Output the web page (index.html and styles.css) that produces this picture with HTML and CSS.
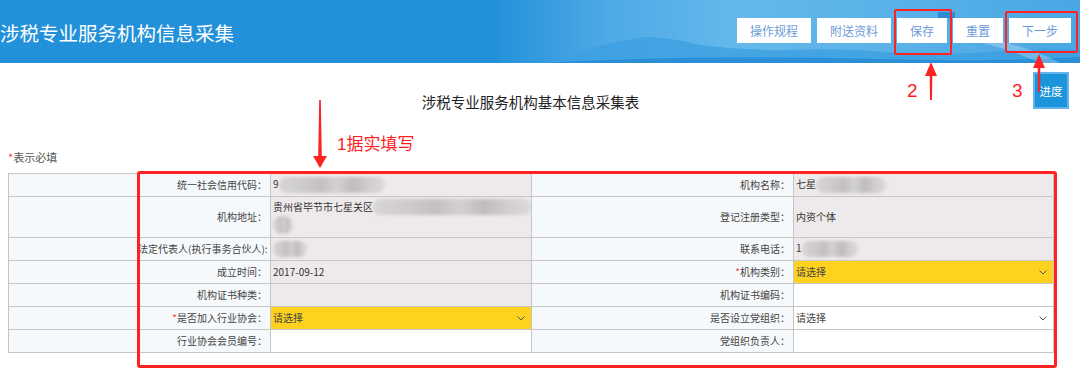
FILE: index.html
```html
<!DOCTYPE html>
<html lang="zh-CN">
<head>
    <meta charset="UTF-8">
    <meta name="viewport" content="width=device-width, initial-scale=1.0">
    <title>涉税专业服务机构信息采集</title>
    <link rel="stylesheet" href="styles.css">
</head>
<body>

    <!-- Header -->
    <header class="topbar">
        <svg class="topbar-bg" width="1080" height="63" viewBox="0 0 1080 63">
            <path d="M560 63 L585 50 Q620 40 646 37 Q668 37 700 45 Q745 51 790 50 Q840 48 885 52 Q950 56 1000 51 Q1045 47 1080 50 L1080 63 Z" fill="#3b9fe0" opacity="0.75"/>
            <path d="M540 63 Q700 54 880 59 Q990 62 1080 57 L1080 63 Z" fill="#2a8fd8"/>
            <path d="M955 38 Q1000 44 1040 63 L1060 63 Q1020 42 970 36 Z" fill="#ffffff" opacity="0.25"/>
            <rect x="938" y="12" width="17" height="6" fill="#2f8ad4"/>
        </svg>
        <h1 class="topbar-title">涉税专业服务机构信息采集</h1>
        <div class="topbar-actions">
            <button class="top-btn">操作规程</button>
            <button class="top-btn">附送资料</button>
            <button class="top-btn">保存</button>
            <button class="top-btn">重置</button>
            <button class="top-btn">下一步</button>
        </div>
    </header>

    <!-- Form -->
    <main class="page">
        <h2 class="form-title">涉税专业服务机构基本信息采集表</h2>
        <p class="req-note"><span class="star">*</span>表示必填</p>

        <table class="info-table">
            <colgroup>
                <col style="width:129px">
                <col style="width:133px">
                <col style="width:261px">
                <col style="width:262px">
                <col style="width:260px">
            </colgroup>
            <tr>
                <td class="blank"></td>
                <td class="label">统一社会信用代码<i class="colon">：</i></td>
                <td class="value locked">9<span class="mask" style="width:106px"></span></td>
                <td class="label">机构名称<i class="colon">：</i></td>
                <td class="value locked">七星<span class="mask" style="width:70px"></span></td>
            </tr>
            <tr class="tall">
                <td class="blank"></td>
                <td class="label">机构地址<i class="colon">：</i></td>
                <td class="value locked top">
                    <div class="addr-line">贵州省毕节市七星关区<span class="mask" style="width:160px"></span></div>
                    <div class="addr-line"><span class="mask round" style="width:20px"></span></div>
                </td>
                <td class="label">登记注册类型<i class="colon">：</i></td>
                <td class="value locked">内资个体</td>
            </tr>
            <tr>
                <td class="blank"></td>
                <td class="label">法定代表人(执行事务合伙人):</td>
                <td class="value locked"><span class="mask" style="width:34px"></span></td>
                <td class="label">联系电话<i class="colon">：</i></td>
                <td class="value locked">1<span class="mask" style="width:56px"></span></td>
            </tr>
            <tr>
                <td class="blank"></td>
                <td class="label">成立时间<i class="colon">：</i></td>
                <td class="value locked">2017-09-12</td>
                <td class="label"><span class="star">*</span>机构类别<i class="colon">：</i></td>
                <td class="value pick required">
                    <div class="pick-box">请选择<svg class="chev" width="8" height="5" viewBox="0 0 8 5"><path d="M0.5 0.5 L4 4 L7.5 0.5" fill="none" stroke="#555" stroke-width="1"/></svg></div>
                </td>
            </tr>
            <tr>
                <td class="blank"></td>
                <td class="label">机构证书种类<i class="colon">：</i></td>
                <td class="value locked"></td>
                <td class="label">机构证书编码<i class="colon">：</i></td>
                <td class="value"></td>
            </tr>
            <tr>
                <td class="blank"></td>
                <td class="label"><span class="star">*</span>是否加入行业协会<i class="colon">：</i></td>
                <td class="value pick required">
                    <div class="pick-box">请选择<svg class="chev" width="8" height="5" viewBox="0 0 8 5"><path d="M0.5 0.5 L4 4 L7.5 0.5" fill="none" stroke="#555" stroke-width="1"/></svg></div>
                </td>
                <td class="label">是否设立党组织<i class="colon">：</i></td>
                <td class="value pick">
                    <div class="pick-box">请选择<svg class="chev" width="8" height="5" viewBox="0 0 8 5"><path d="M0.5 0.5 L4 4 L7.5 0.5" fill="none" stroke="#555" stroke-width="1"/></svg></div>
                </td>
            </tr>
            <tr>
                <td class="blank"></td>
                <td class="label">行业协会会员编号<i class="colon">：</i></td>
                <td class="value"></td>
                <td class="label">党组织负责人<i class="colon">：</i></td>
                <td class="value"></td>
            </tr>
        </table>
    </main>

    <!-- Floating progress button -->
    <button class="progress-btn">进度</button>

    <!-- Screenshot annotations -->
    <div class="mark-box mark-save"></div>
    <div class="mark-box mark-next"></div>
    <div class="mark-box mark-form"></div>
    <span class="mark-text mark-t1">1据实填写</span>
    <span class="mark-text mark-t2">2</span>
    <span class="mark-text mark-t3">3</span>
    <svg class="mark-arrows" width="1080" height="388" viewBox="0 0 1080 388">
        <path d="M319.2 100 L320.8 100 L321.8 156 L327 156 L320 168 L313 156 L318.2 156 Z" fill="#ff2222"/>
        <path d="M931 62 L937 76 L932.3 76 L932 100 L930 100 L929.7 76 L925 76 Z" fill="#ff2222"/>
        <path d="M1039 54 L1045 68 L1040.3 68 L1040 92 L1038 92 L1037.7 68 L1033 68 Z" fill="#ff2222"/>
    </svg>

</body>
</html>
```

FILE: styles.css
```css
/* Global */
* {
    margin: 0;
    padding: 0;
    box-sizing: border-box;
}

body {
    width: 1080px;
    height: 388px;
    overflow: hidden;
    position: relative;
    background: #fff;
    color: #333;
    font-family: "Noto Sans CJK SC", "Liberation Sans", sans-serif;
}

/* Header */
.topbar {
    position: relative;
    height: 63px;
    display: flex;
    justify-content: space-between;
    align-items: flex-start;
    background: linear-gradient(90deg, #2391da 0%, #2391da 46%, #4ea9e5 56%, #64b8eb 68%, #5ab2e8 82%, #4aa7e4 100%);
    overflow: hidden;
}

.topbar-bg {
    position: absolute;
    left: 0;
    top: 0;
}

.topbar-title {
    position: relative;
    padding-top: 22px;
    font-size: 19.5px;
    line-height: 22px;
    font-weight: 400;
    color: #fff;
}

.topbar-actions {
    position: relative;
    display: flex;
    gap: 6px;
    padding-top: 18px;
    padding-right: 9px;
}

.top-btn {
    height: 25px;
    padding: 0 13px;
    background: #fff;
    border: none;
    color: #6c9bd8;
    font-family: inherit;
    font-size: 12px;
    line-height: 25px;
}

/* Form */
.page {
    padding: 0 8px;
}

.form-title {
    width: 1045px;
    margin-top: 29px;
    text-align: center;
    font-size: 14.5px;
    line-height: 20px;
    font-weight: 400;
    color: #222;
}

.req-note {
    margin-top: 38px;
    font-size: 11px;
    line-height: 14px;
    color: #555;
}

.star {
    color: #f04040;
}

.info-table {
    width: 1045px;
    margin-top: 9px;
    border-collapse: collapse;
    table-layout: fixed;
    font-size: 10px;
}

.info-table td {
    height: 23px;
    border: 1px solid #c6c6c6;
    line-height: 14px;
    white-space: nowrap;
    overflow: hidden;
}

.info-table tr.tall td {
    height: 41px;
}

.info-table .blank,
.info-table .label {
    background: #f6f9fb;
}

.info-table .label {
    text-align: right;
    padding-right: 3px;
    color: #444;
}

/* full-width colon drawn centred, as the original font does */
.colon {
    font-style: normal;
    font-family: "Noto Sans CJK TC", sans-serif;
}

.info-table .value {
    padding-left: 2px;
    color: #333;
    background: #fff;
}

.info-table .locked {
    background: #eee9ea;
}

.info-table .top {
    vertical-align: top;
    padding-top: 1px;
}

.addr-line {
    height: 18px;
    display: flex;
    align-items: center;
}

.info-table .pick {
    padding: 0;
}

.info-table .required {
    background: #fed21f;
}

.pick-box {
    display: flex;
    justify-content: space-between;
    align-items: center;
    padding: 0 6px 0 2px;
    color: #444;
}

.chev {
    display: block;
}

/* blurred personal data */
.mask {
    display: inline-block;
    height: 16px;
    vertical-align: middle;
    border-radius: 8px;
    background: linear-gradient(90deg, #d8d5d6 0%, #cfcccd 20%, #c3c0c1 40%, #d4d1d2 55%, #bfbcbd 70%, #d1cecf 85%, #dcd9da 100%);
    filter: blur(1.5px);
}

.mask.round {
    height: 18px;
    border-radius: 9px;
}

/* Floating */
.progress-btn {
    position: absolute;
    left: 1033px;
    top: 72px;
    width: 36px;
    height: 37px;
    background: #1b94dc;
    border: 2px solid #62b5ea;
    color: #fff;
    font-family: inherit;
    font-size: 11.5px;
}

/* Annotations */
.mark-box {
    position: absolute;
    border: 2px solid #ff2222;
    border-radius: 2px;
}

.mark-save {
    left: 894px;
    top: 9px;
    width: 58px;
    height: 46px;
}

.mark-next {
    left: 1005px;
    top: 11px;
    width: 73px;
    height: 42px;
}

.mark-form {
    left: 137px;
    top: 171px;
    width: 920px;
    height: 197px;
    border-width: 3px;
    border-radius: 3px;
}

.mark-text {
    position: absolute;
    color: #ff2222;
    font-family: "Liberation Sans", "Noto Sans CJK SC", sans-serif;
    line-height: 1;
}

.mark-t1 {
    left: 337px;
    top: 136px;
    font-size: 17px;
}

.mark-t2 {
    left: 907px;
    top: 81px;
    font-size: 19px;
}

.mark-t3 {
    left: 1012px;
    top: 81px;
    font-size: 19px;
}

.mark-arrows {
    position: absolute;
    left: 0;
    top: 0;
    pointer-events: none;
}
```
